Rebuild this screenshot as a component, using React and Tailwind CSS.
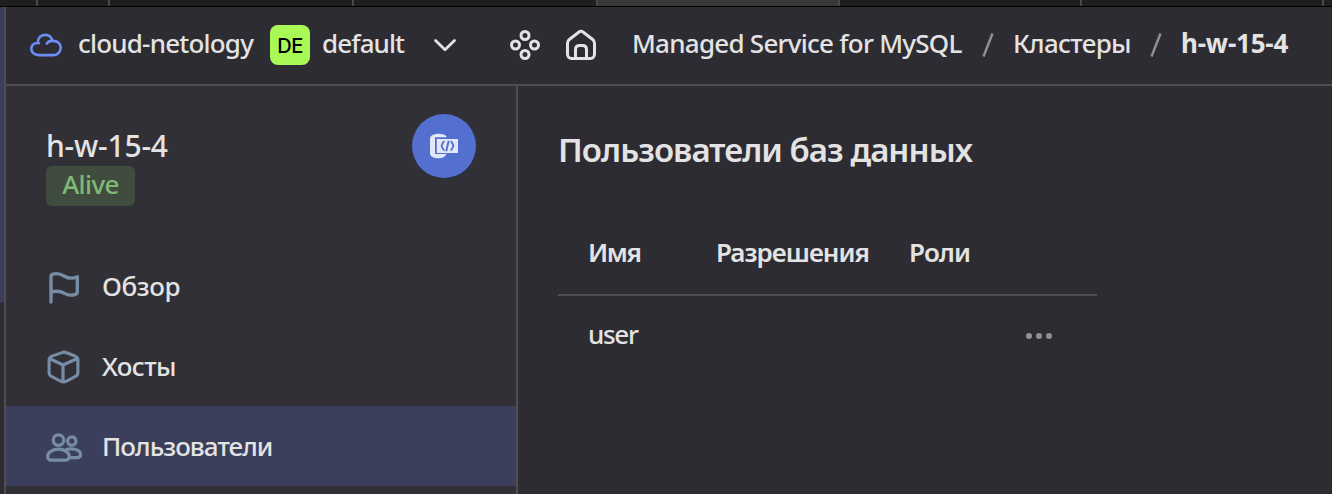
import React from "react";

function CloudIcon() {
  return (
    <svg width="34" height="28" viewBox="0 -0.500 34 28" fill="none" stroke="#6b8df6" strokeWidth="2.6" strokeLinecap="round" strokeLinejoin="round">
      <path d="M8.8 11.5C8.4 6.4 11.8 3.4 16 3.4c3.600 0 6.500 2 7.600 6C28.800 9.300 31.700 12.200 31.700 16c0 4-3 7.600-7.200 7.600H9.500C5.500 23.600 2.300 21 2.300 17.300c0-3.500 2.700-6 6.500-5.800M8.800 11.500l1 .2" />
      <path d="M23.600 9.400c-2.900-.1-4.900 1-5.800 2.700" />
    </svg>
  );
}

function HomeIcon() {
  return (
    <svg width="32" height="32" viewBox="0 0 32 32" fill="none" stroke="#e3e3e3" strokeWidth="3" strokeLinejoin="round">
      <path d="M2.500 14.200c0-1.500.6-2.800 1.800-3.700l9.400-7.300c1.400-1.100 3.200-1.100 4.600 0l9.400 7.300c1.200.9 1.800 2.200 1.800 3.700V25c0 2.500-1.800 4.500-4 4.500h-19c-2.200 0-4-2-4-4.500z" />
      <path d="M10.500 29V20.500c0-2.500 1.500-4 4-4h3c2.500 0 4 1.500 4 4V29" />
    </svg>
  );
}

function ServicesIcon() {
  return (
    <svg width="30" height="30" viewBox="0 0 30 30" fill="none" stroke="#e3e3e3" strokeWidth="3">
      <circle cx="15" cy="5.500" r="4" />
      <circle cx="5.500" cy="15" r="4" />
      <circle cx="24.500" cy="15" r="4" />
      <circle cx="15" cy="24.500" r="4" />
    </svg>
  );
}

function FlagIcon() {
  return (
    <svg width="36" height="36" viewBox="0 -1 36 36" fill="none" stroke="#778da6" strokeWidth="3.400" strokeLinecap="round" strokeLinejoin="round">
      <path d="M6 33V7.500C6 6.200 6.600 5.600 8 5.200c5-1.600 8-.1 11.500 2 3.500 2.100 8 2.700 12.800.6v15c0 1.300-.5 2.100-1.800 2.500-4.500 1.500-8 .9-11-.9-3.500-2.100-8.500-3-13.500-1" />
    </svg>
  );
}

function CubeIcon() {
  return (
    <svg width="36" height="36" viewBox="-1.500 -1.500 36 36" fill="none" stroke="#778da6" strokeWidth="3.200" strokeLinecap="round" strokeLinejoin="round">
      <path d="M17 3.200c1.700-.8 2.500-.8 4.200-.1l9.100 3.600c2 .8 3.100 2.100 3.100 4.200v12.700c0 2.200-1 3.400-2.900 4.400l-9.300 4.800c-2 1-3.200 1-5.200 0l-9.400-4.800c-1.900-1-2.900-2.200-2.900-4.400v-12.700c0-2 1-3.200 2.900-4.100z" transform="translate(-1 0) scale(.97)" />
      <path d="M3.500 9.300l12 5.700q1 .5 2 0L30.500 9.300M16.500 15.500V32" />
    </svg>
  );
}

function UsersIcon() {
  return (
    <svg width="38" height="32" viewBox="0 -1.800 38 32" fill="none" stroke="#778da6" strokeWidth="3.200">
      <circle cx="13.500" cy="8.300" r="5.300" />
      <circle cx="26.800" cy="9.300" r="4.200" />
      <path d="M2.600 24.600c0-4 4.900-7.200 10.800-7.200s10.900 3.200 10.900 7.200c0 2.200-1.600 3.800-3.800 3.800H6.200c-2.200 0-3.600-1.600-3.600-3.800z" />
      <path d="M20.500 18.400c1.800-.9 3.700-1.300 6-1.300 5 0 9 2.400 9 5.500 0 1.900-1.400 3.200-3.400 3.200H24" />
    </svg>
  );
}

function SqlIcon() {
  return (
    <svg width="30" height="26" viewBox="0 0 30 26">
      <path d="M1 5.500C1 3 4.600.8 9.500.8c3.600 0 6.300.8 7.600 2.200l.6 1.200H6v16.700h11.500c-1.200 2.600-4.200 4.300-8 4.300C4.600 25.200 1 23 1 20.400z" fill="#e2e8f8" />
      <path d="M7.800 6H29v14H7.800z" fill="#e2e8f8" />
      <path d="M15.500 8.500c-3 .4-1.100 3.700-3.500 4.300 2.400.6.500 4 3.500 4.400M21.500 8.500c3 .4 1.100 3.700 3.500 4.300-2.400.6-.5 4-3.500 4.400M19.700 7.700l-2.500 10.500" fill="none" stroke="#5370d1" strokeWidth="1.900" />
    </svg>
  );
}

const items = [
  { label: "Обзор", icon: FlagIcon, tracking: "tracking-[-0.4px]" },
  { label: "Хосты", icon: CubeIcon, tracking: "tracking-[-0.6px]" },
  { label: "Пользователи", icon: UsersIcon, tracking: "tracking-[-0.95px]", active: true },
];

export default function App() {
  return (
    <div className="flex h-[494px] w-[1332px] flex-col overflow-hidden bg-[#2d2c32] font-['Noto_Sans',sans-serif] text-[26px] leading-10 font-medium whitespace-nowrap text-[#e3e3e3]">
      <div className="flex h-[7px] shrink-0 border-b border-black bg-[#1f1f1f]">
        <div className="w-[38px] border-r-2 border-[#48484a]" />
        <div className="w-[72px] border-r-2 border-[#48484a]" />
        <div className="w-[244px] border-r-2 border-[#48484a]" />
        <div className="w-[244px] border-r-2 border-[#48484a]" />
        <div className="w-[242px] border-r-2 border-[#48484a] bg-[#383838]" />
        <div className="w-[242px] border-r-2 border-[#48484a]" />
        <div className="w-[242px] border-r-2 border-[#48484a]" />
      </div>
      <div className="flex min-h-0 flex-1">
        <div className="w-1 shrink-0">
          <div className="h-[296px] rounded-br-[4px] bg-[#3a3e5c]" />
        </div>
        <div className="w-0.5 shrink-0 bg-[#4e4d52]" />
        <div className="flex min-w-0 flex-1 flex-col">
          <header className="flex h-[79px] shrink-0 items-center border-b-2 border-[#4e4d52] pb-px pl-[23px]">
            <div className="flex w-[49px] items-center"><CloudIcon /></div>
            <span className="w-48 pb-1 tracking-[-0.8px]">cloud-netology</span>
            <span className="flex h-10 w-10 items-center justify-center rounded-lg bg-[#a9f956] pt-0.5 font-['Inter',sans-serif] text-[20px] font-medium tracking-[-0.6px] text-black">DE</span>
            <span className="ml-3 w-[111px] pb-1 tracking-[-0.9px]">default</span>
            <svg width="24" height="14" viewBox="0 0 24 14" fill="none" stroke="#e3e3e3" strokeWidth="2.800" strokeLinecap="round" strokeLinejoin="round"><path d="M2.500 2.500L12 11.800l9.500-9.300" /></svg>
            <div className="ml-[53px]"><ServicesIcon /></div>
            <div className="ml-[25px]"><HomeIcon /></div>
            <span className="ml-[35px] w-[350px] pb-1 tracking-[-0.75px]">Managed Service for MySQL</span>
            <svg className="mr-[19px]" width="12" height="26" viewBox="0 0 12 26" stroke="#919094" strokeWidth="2.400"><path d="M1.500 24.500L10.500 1.500" /></svg>
            <span className="w-[137px] pb-1 tracking-[-0.7px]">Кластеры</span>
            <svg className="mr-[19px]" width="12" height="26" viewBox="0 0 12 26" stroke="#919094" strokeWidth="2.400"><path d="M1.500 24.500L10.500 1.500" /></svg>
            <span className="pb-1 font-bold tracking-[-0.2px]">h-w-15-4</span>
          </header>
          <div className="flex min-h-0 flex-1">
            <aside className="flex w-[512px] shrink-0 flex-col border-r-2 border-[#4e4d52] bg-[#313036]">
              <div className="flex h-[160px] shrink-0 justify-between pt-7 pr-10 pl-10">
                <div className="flex flex-col items-start pt-3">
                  <h2 className="text-[30px] tracking-[-0.2px]">h-w-15-4</h2>
                  <span className="flex h-10 w-[89px] items-center justify-center rounded-md bg-[#404c3e] pb-1 tracking-[-0.6px] text-[#7fb977]">Alive</span>
                </div>
                <div className="flex h-16 w-16 items-center justify-center rounded-full bg-[#5370d1]"><SqlIcon /></div>
              </div>
              <nav className="flex flex-col">
                {items.map(({ label, icon: Icon, tracking, active }) => (
                  <div key={label} className={`flex h-20 items-center pb-px pl-[39px] ${active ? "bg-[#3c3f5b]" : ""}`}>
                    <div className="flex w-[57px] items-center"><Icon /></div>
                    <span className={tracking}>{label}</span>
                  </div>
                ))}
              </nav>
            </aside>
            <main className="flex-1 pt-10 pl-10">
              <h1 className="h-12 text-[33px] leading-[47px] font-semibold tracking-[-0.95px]">Пользователи баз данных</h1>
              <section className="mt-[39px] w-[539px]">
                <div className="flex h-[83px] border-b-2 border-[#4e4d52] pt-[19px] pl-[30px] font-semibold">
                  <span className="w-[128px] tracking-[-1.4px]">Имя</span>
                  <span className="w-[193px] tracking-[-1px]">Разрешения</span>
                  <span className="tracking-[-0.8px]">Роли</span>
                </div>
                <div className="flex h-20 items-center pl-[30px]">
                  <span className="w-[438px] pb-1 tracking-[-1.3px]">user</span>
                  <svg width="26" height="6" viewBox="0 0 26 6" fill="#919094"><circle cx="3" cy="3" r="3" /><circle cx="13" cy="3" r="3" /><circle cx="23" cy="3" r="3" /></svg>
                </div>
              </section>
            </main>
          </div>
        </div>
      </div>
    </div>
  );
}
